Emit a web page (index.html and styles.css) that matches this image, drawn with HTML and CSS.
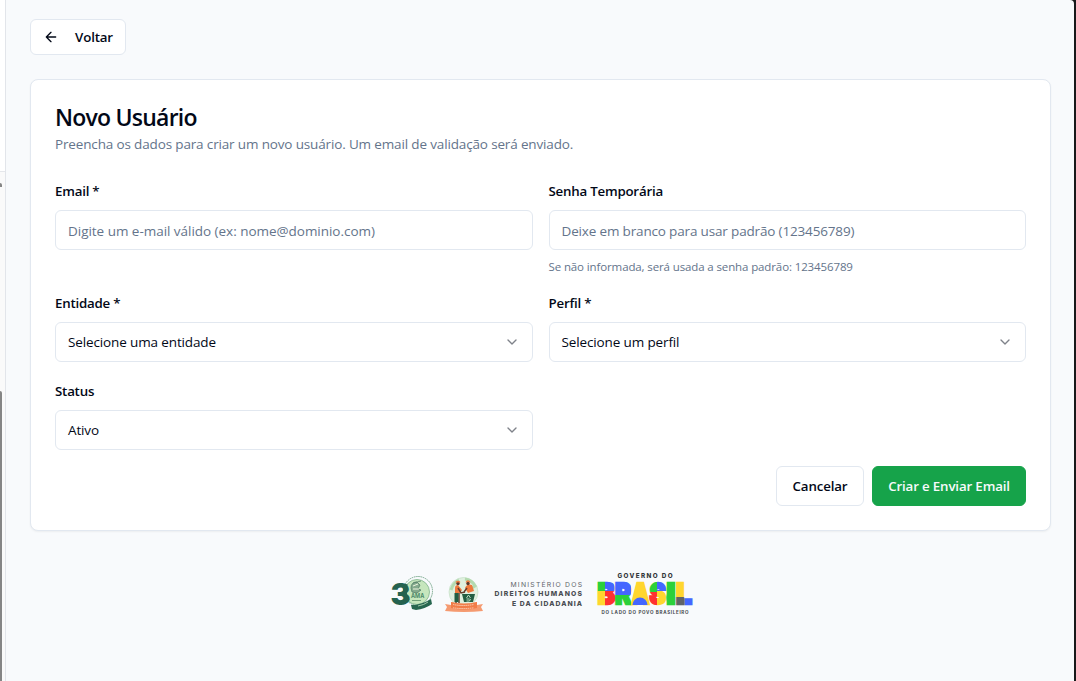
FILE: index.html
```html
<!DOCTYPE html>
<html lang="pt-BR">
<head>
<meta charset="utf-8">
<title>Novo Usuário</title>
<link rel="stylesheet" href="styles.css">
</head>
<body>
<div class="shell">
  <aside class="sidebar"><div class="sidebar-head"></div><div class="sidebar-body"><span class="scroll-arrow"></span><span class="scroll-thumb"></span></div></aside>
  <main class="main">
    <button class="btn back"><svg class="icon" viewBox="0 0 24 24"><path d="m12 19-7-7 7-7M19 12H5"/></svg><span>Voltar</span></button>
    <section class="card">
      <h1 class="title">Novo Usuário</h1>
      <p class="subtitle">Preencha os dados para criar um novo usuário. Um email de validação será enviado.</p>
      <form class="grid">
        <div class="field"><label class="label">Email *</label><div class="control placeholder wide">Digite um e-mail válido (ex: nome@dominio.com)</div></div>
        <div class="field"><label class="label">Senha Temporária</label><div class="control placeholder">Deixe em branco para usar padrão (123456789)</div><p class="hint">Se não informada, será usada a senha padrão: 123456789</p></div>
        <div class="field"><label class="label">Entidade *</label><div class="control"><span>Selecione uma entidade</span><svg class="icon chevron" viewBox="0 0 24 24"><path d="m6 9 6 6 6-6"/></svg></div></div>
        <div class="field"><label class="label">Perfil *</label><div class="control"><span>Selecione um perfil</span><svg class="icon chevron" viewBox="0 0 24 24"><path d="m6 9 6 6 6-6"/></svg></div></div>
        <div class="field"><label class="label">Status</label><div class="control"><span>Ativo</span><svg class="icon chevron" viewBox="0 0 24 24"><path d="m6 9 6 6 6-6"/></svg></div></div>
      </form>
      <div class="actions"><button class="btn cancel">Cancelar</button><button class="btn primary">Criar e Enviar Email</button></div>
    </section>
    <footer class="footer">
      <svg class="logos" viewBox="388 568 308 50">
        <defs>
          <pattern id="blocks" patternUnits="userSpaceOnUse" x="596" y="581" width="98" height="25">
            <rect width="98" height="25" fill="#ffd62e"/>
            <path d="M0 0h9v10H0z" fill="#2bd03a"/>
            <path d="M9 0h9.500v10H9z" fill="#4466ff"/>
            <path d="M9 10h10v15H9z" fill="#ff3131"/>
            <path d="M19 0h16v14h-16z" fill="#4466ff"/>
            <path d="M19 14h16v11h-16z" fill="#2bd03a"/>
            <path d="M53 0h8v11h-8zM70 0h9.500v25H70z" fill="#2bd03a"/>
            <path d="M61 0h9v10h-9z" fill="#4466ff"/>
            <path d="M52 11h9v14h-9z" fill="#ff3131"/>
            <path d="M79.500 16h9v9h-9z" fill="#606368"/>
            <path d="M88.500 16H98v9h-9.500z" fill="#4466ff"/>
          </pattern>
        </defs>
        <g>
          <circle cx="418" cy="591" r="14.500" fill="none" stroke="#76a78a" stroke-width="1" stroke-dasharray="1.500 .7"/>
          <circle cx="417" cy="592" r="12.500" fill="#c6e6bd" stroke="#7eb38a" stroke-width=".8"/>
          <text class="thirty" x="390.500" y="604.500">3</text>
          <path d="M406 584q-3 9 2 17" fill="none" stroke="#25624f" stroke-width="3.500"/>
          <path d="M411 588q0-6 6-6l3 3-2 4 3 1-4 3-5-1zm2-5 8-2" fill="#84aa8d" stroke="#557f69" stroke-width=".8"/>
          <path d="M413 586l5-2m-5 5h6" stroke="#eef5df" stroke-width="1"/>
          <text class="ama" x="411" y="598">AMA</text>
          <path d="M412 600.500h9" stroke="#70a079" stroke-width="1"/>
          <path d="M411 605q10 0 20-6l1 5q-7 5-16 6l-4-1z" fill="#27664f"/>
          <path d="M418 606q6-1 10-4" stroke="#a1c7a8" fill="none" stroke-width="1"/>
        </g>
        <g>
          <circle cx="463.500" cy="592" r="14.500" fill="#e0f0df" stroke="#c4dfc5" stroke-width=".7"/>
          <path d="M451 590q2-7 8-10m6-1q7 1 10 7l-5 3" fill="none" stroke="#b4daaf" stroke-width="3"/>
          <path d="M455 588q0-3 3-3l4 5-2 3h-5zM465 588q2-5 7-3l2 6-6 2z" fill="#ef793d"/>
          <circle cx="458" cy="583.500" r="1.700" fill="#5b382d"/><circle cx="468" cy="583.500" r="1.700" fill="#5b382d"/>
          <path d="M456 582.500q2-2 4 0m6 0q2-3 4 0" stroke="#ef793d" stroke-width="1.300" fill="none"/>
          <path d="M458 588l3 5 4-1m2-4-3 4m-8 2v9m3-10v10" stroke="#663d2d" stroke-width="1.500" fill="none"/>
          <path d="M454.500 593h4v9h-4zM462 594h13l-2 8h-9z" fill="#235e42"/>
          <path d="M466.500 598l2-3 2 3m-4 1h3m1 0-1 2h-3" fill="none" stroke="#c9e5ce" stroke-width=".9"/>
          <path d="M445 604l6 1v-3q13 4 26 0v3l6-1-2 3 2 4q-9 1-19 1t-19-1l2-4z" fill="#f59a70"/>
          <path d="M451 602q13 3 26 0v6q-13 3-26 0z" fill="#f17d49"/>
          <path d="M453 604.500q10 2 21 0m-21 3.300q10 1.500 21 0" stroke="#fbd5bf" stroke-width=".9" stroke-dasharray="1.500 .6" fill="none"/>
        </g>
        <g class="ministry">
          <text x="510.500" y="587" textLength="71.500">MINISTÉRIO DOS</text>
          <text class="strong" x="494.500" y="596" textLength="87.500">DIREITOS HUMANOS</text>
          <text class="strong" x="512" y="605.500" textLength="70">E DA CIDADANIA</text>
        </g>
        <text class="government" x="617.500" y="577.500" textLength="55">GOVERNO DO</text>
        <g class="brasil" fill="url(#blocks)" stroke="url(#blocks)">
          <text x="597.500" y="603.800" textLength="17.500" lengthAdjust="spacingAndGlyphs">B</text>
          <text x="615" y="603.800" textLength="16.500" lengthAdjust="spacingAndGlyphs">R</text>
          <text x="631.500" y="603.800" textLength="18" lengthAdjust="spacingAndGlyphs" class="solid">A</text>
          <text x="649.500" y="603.800" textLength="16.500" lengthAdjust="spacingAndGlyphs">S</text>
          <text x="666.500" y="603.800" textLength="9" lengthAdjust="spacingAndGlyphs">I</text>
          <text x="676" y="603.800" textLength="16" lengthAdjust="spacingAndGlyphs">L</text>
        </g>
        <path d="M640 585l-6 15h13z" fill="#ffd62e"/>
        <path d="M632.500 605a7.500 7.500 0 0 1 15 0z" fill="#4466ff"/>
        <text class="slogan" x="601.500" y="613.800" textLength="87">DO LADO DO POVO BRASILEIRO</text>
      </svg>
    </footer>
  </main>
  <div class="edge"></div>
</div>
</body>
</html>
```
FILE: styles.css
```css
* { box-sizing: border-box; }
body { margin: 0; font-family: "Open Sans", "Noto Sans", sans-serif; font-size: 13.5px; color: #020817; background: #18191a; }
.shell { display: flex; height: 681px; overflow: hidden; background: #18191a; }
.sidebar { width: 6px; flex: none; border-right: 1px solid #e2e5ea; background: #fff; display: flex; flex-direction: column; }
.sidebar-head { height: 172px; border-bottom: 1px solid #e5e7eb; }
.sidebar-body { flex: 1; background: #fafafa; display: flex; flex-direction: column; justify-content: space-between; padding-top: 11px; }
.scroll-arrow { width: 2px; height: 4px; background: #858585; border-radius: 0 2px 0 0; }
.scroll-thumb { width: 2px; height: 290px; background: #858585; border-radius: 0 2px 0 0; }
.main { flex: 1; padding: 19px 23px 0 24px; background: #f8fafc; border-top-right-radius: 4px; }
.edge { width: 2px; background: #18191a; }
.btn { display: inline-flex; align-items: center; justify-content: center; font: 600 13.3px "Open Sans", sans-serif; letter-spacing: -.15px; color: #020817; background: #fff; border: 1px solid #e2e8f0; border-radius: 6px; height: 40px; padding: 0; white-space: nowrap; }
.back { display: flex; width: 96px; height: 36px; gap: 16px; }
.icon { width: 16px; height: 16px; fill: none; stroke: currentColor; stroke-width: 2; stroke-linecap: round; stroke-linejoin: round; flex: none; }
.card { margin-top: 24px; padding: 24px; height: 452px; background: #fff; border: 1px solid #e2e8f0; border-radius: 8px; box-shadow: 0 1px 2px rgba(0,0,0,.05); }
.title { margin: 0 0 5px; padding-top: 1px; font-size: 23px; line-height: 24px; font-weight: 600; letter-spacing: -.77px; }
.subtitle { margin: 0 0 24px; line-height: 20px; color: #64748b; letter-spacing: -.15px; }
.grid { display: grid; grid-template-columns: 1fr 1fr; gap: 16px; }
.label { display: block; font-weight: 600; font-size: 13.3px; line-height: 24px; height: 24px; padding-top: 1px; margin-bottom: 8px; letter-spacing: -.22px; }
.control { height: 40px; border: 1px solid #e2e8f0; border-radius: 6px; padding: 0 12px; display: flex; align-items: center; justify-content: space-between; letter-spacing: -.13px; }
.placeholder { color: #64748b; padding-top: 2px; letter-spacing: -.16px; }
.placeholder.wide { letter-spacing: -.03px; }
.chevron { opacity: .5; }
.hint { margin: 8px 0 0; padding-top: 1px; height: 16px; font-size: 11.5px; line-height: 16px; color: #64748b; letter-spacing: -.12px; }
.actions { display: flex; justify-content: flex-end; gap: 8px; margin-top: 16px; }
.cancel { width: 88px; }
.primary { width: 154px; background: #16a34a; border-color: #16a34a; color: #f8fafc; }
.footer { display: flex; margin: 37px 0 0 358px; }
.logos { width: 308px; height: 50px; }
.thirty { font: 900 30px Inter, sans-serif; fill: #25624f; }
.ama { font: 700 5.5px Inter, sans-serif; fill: #4c8969; }
.ministry { font: 400 6.8px Inter, sans-serif; fill: #62656a; }
.ministry .strong { font-weight: 800; fill: #4b4e52; }
.government { font: 800 6.3px Inter, sans-serif; fill: #33363a; }
.slogan { font: 700 4.5px Inter, sans-serif; fill: #45484c; }
.brasil { font: 900 29px Inter, sans-serif; stroke-width: 2.4px; stroke-linejoin: miter; }
.brasil .solid { fill: #ffd62e; stroke: #ffd62e; }
```
